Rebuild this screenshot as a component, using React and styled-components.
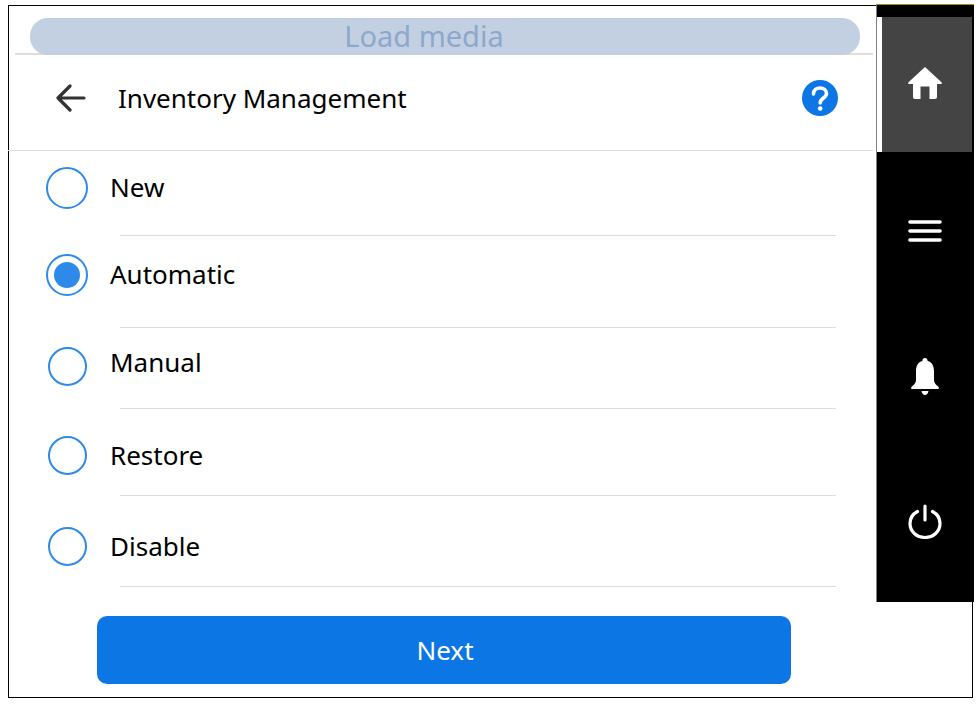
import React from 'react';
import styled, { createGlobalStyle } from 'styled-components';

const GlobalStyle = createGlobalStyle`
    html, body {
        margin: 0;
        padding: 0;
        background: #fff;
        font-family: "Noto Sans", "Open Sans", sans-serif;
    }
`;

const Frame = styled.div`
    box-sizing: border-box;
    display: flex;
    align-items: flex-start;
    width: 965px;
    height: 693px;
    margin: 5px 0 0 8px;
    border: 1px solid #000;
    background: #fff;
`;

const Main = styled.div`
    display: flex;
    flex-direction: column;
    width: 867px;
    flex-shrink: 0;
`;

const LoadStrip = styled.div`
    box-sizing: border-box;
    height: 49px;
    margin: 0 3px 0 6px;
    padding: 12px 13px 0 15px;
    border-bottom: 2px solid #dedede;
`;

const LoadBar = styled.div`
    display: flex;
    align-items: center;
    justify-content: center;
    height: 37px;
    padding: 0 42px 2px 0;
    box-sizing: border-box;
    border-radius: 18px;
    background: #c3d0e2;
    color: #8da8cc;
    font-size: 29px;
`;

const Header = styled.div`
    box-sizing: border-box;
    display: flex;
    align-items: center;
    height: 96px;
    margin-left: -1px;
    margin-right: 3px;
    padding: 0 35px 10px 48px;
    border-bottom: 1px solid #dcdcdc;
`;

const Title = styled.div`
    flex: 1;
    margin-left: 32px;
    color: #000;
    font-size: 26px;
    line-height: 30px;
`;

const Row = styled.div`
    display: grid;
    grid-template-columns: 102px 1fr;
    align-items: start;
    height: ${(props) => props.$height}px;
`;

const Radio = styled.div`
    box-sizing: border-box;
    display: flex;
    align-items: center;
    justify-content: center;
    width: ${(props) => props.$size}px;
    height: ${(props) => props.$size}px;
    margin-top: ${(props) => props.$top}px;
    margin-left: ${(props) => props.$left}px;
    border: 2px solid #2e8ae8;
    border-radius: 50%;
`;

const RadioDot = styled.div`
    width: 26px;
    height: 26px;
    border-radius: 50%;
    background: #2e8ae8;
`;

const Label = styled.div`
    margin-top: ${(props) => props.$top}px;
    margin-left: -1px;
    color: #000;
    font-size: 26px;
    line-height: 30px;
`;

const Separator = styled.div`
    width: 716px;
    height: 1px;
    margin-left: 111px;
    background: #dcdcdc;
`;

const NextButton = styled.button`
    width: 694px;
    height: 68px;
    margin: 29px 0 0 88px;
    padding: 0 0 0 2px;
    border: 0;
    border-radius: 10px;
    background: #0b76e4;
    color: #fff;
    font-family: inherit;
    font-size: 26px;
`;

const Sidebar = styled.div`
    box-sizing: border-box;
    display: flex;
    flex-direction: column;
    flex-shrink: 0;
    width: 98px;
    height: 598px;
    margin: -2px -2px 0 0;
    padding-top: 12px;
    border-top: 1px solid #a09000;
    border-left: 1px solid #808080;
    background: #000;
`;

const HomeTile = styled.div`
    box-sizing: border-box;
    display: flex;
    align-items: center;
    justify-content: center;
    width: 95px;
    height: 135px;
    padding: 0 5px 3px 0;
    border-left: 5px solid #fff;
    background: #444;
`;

const NavItem = styled.div`
    display: flex;
    align-items: center;
    justify-content: center;
    width: 95px;
    height: ${(props) => props.$height}px;
`;

const BackIcon = () => (
    <svg width="30" height="28" viewBox="0 0 30 28" fill="none">
        <path d="M2 14H28M14 2L2 14L14 26" stroke="#333" strokeWidth="3.2" strokeLinecap="round" strokeLinejoin="round" />
    </svg>
);

const HelpIcon = () => (
    <svg width="36" height="36" viewBox="0 0 36 36">
        <circle cx="18" cy="18" r="18" fill="#0b76e4" />
        <path d="M11.5 14C11.5 10 14.5 8 18 8C21.5 8 24.5 10 24.5 13.5C24.5 18 18.2 18 18.2 23" fill="none" stroke="#fff" strokeWidth="3.6" strokeLinecap="round" />
        <circle cx="18.2" cy="28.5" r="2.3" fill="#fff" />
    </svg>
);

const HomeIcon = () => (
    <svg width="34" height="32" viewBox="0 0 34 32">
        <path
            d="M17 0L33.5 15.2C34.3 16 33.8 17 32.8 17H29V30C29 31 28.2 32 27 32H21.5V19.5H12.5V32H7C5.8 32 5 31 5 30V17H1.2C0.2 17 -0.3 16 0.5 15.2Z"
            fill="#fff"
        />
    </svg>
);

const MenuIcon = () => (
    <svg width="34" height="24" viewBox="0 0 34 24">
        <path d="M2 3H32M2 12H32M2 21H32" stroke="#fff" strokeWidth="3.6" strokeLinecap="round" />
    </svg>
);

const BellIcon = () => (
    <svg width="28" height="37" viewBox="0 0 28 37">
        <path
            d="M14 0C15.6 0 16.6 1.2 16.6 3C21 4.2 23 8 23 13V22C23 25 25 27 27.2 28.6C28.4 29.6 28 31 26.6 31H1.4C0 31 -0.4 29.6 0.8 28.6C3 27 5 25 5 22V13C5 8 7 4.2 11.4 3C11.4 1.2 12.4 0 14 0Z"
            fill="#fff"
        />
        <path d="M10.5 33H17.5C17 35.5 15.6 37 14 37C12.4 37 11 35.5 10.5 33Z" fill="#fff" />
    </svg>
);

const PowerIcon = () => (
    <svg width="34" height="35" viewBox="0 0 34 35" fill="none">
        <path d="M17 2V16" stroke="#fff" strokeWidth="3.2" strokeLinecap="round" />
        <path d="M9.5 7.5C4.8 10 2 14.5 2 19.5C2 27.5 8.6 33.5 17 33.5C25.4 33.5 32 27.5 32 19.5C32 14.5 29.2 10 24.5 7.5" stroke="#fff" strokeWidth="3.2" strokeLinecap="round" />
    </svg>
);

const options = [
    { label: 'New', height: 84, size: 42, left: 37, radioTop: 16, labelTop: 21 },
    { label: 'Automatic', height: 91, size: 42, left: 37, radioTop: 18, labelTop: 23, selected: true },
    { label: 'Manual', height: 80, size: 39, left: 39, radioTop: 19, labelTop: 19 },
    { label: 'Restore', height: 86, size: 39, left: 39, radioTop: 27, labelTop: 31 },
    { label: 'Disable', height: 90, size: 39, left: 39, radioTop: 31, labelTop: 35 },
];

const App = () => {
    return (
        <>
            <GlobalStyle />
            <Frame>
                <Main>
                    <LoadStrip>
                        <LoadBar>Load media</LoadBar>
                    </LoadStrip>
                    <Header>
                        <BackIcon />
                        <Title>Inventory Management</Title>
                        <HelpIcon />
                    </Header>
                    {options.map((option) => (
                        <React.Fragment key={option.label}>
                            <Row $height={option.height}>
                                <Radio $size={option.size} $left={option.left} $top={option.radioTop}>
                                    {option.selected && <RadioDot />}
                                </Radio>
                                <Label $top={option.labelTop}>{option.label}</Label>
                            </Row>
                            <Separator />
                        </React.Fragment>
                    ))}
                    <NextButton>Next</NextButton>
                </Main>
                <Sidebar>
                    <HomeTile>
                        <HomeIcon />
                    </HomeTile>
                    <NavItem $height={157}>
                        <MenuIcon />
                    </NavItem>
                    <NavItem $height={134}>
                        <BellIcon />
                    </NavItem>
                    <NavItem $height={156}>
                        <PowerIcon />
                    </NavItem>
                </Sidebar>
            </Frame>
        </>
    );
};

export default App;
